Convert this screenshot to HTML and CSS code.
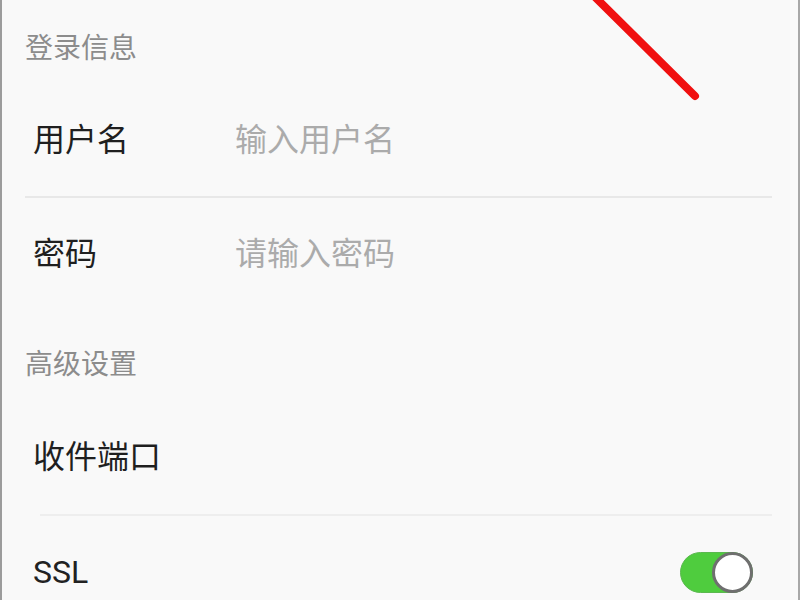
FILE: index.html
```html
<!DOCTYPE html>
<html lang="zh-CN">
<head>
<meta charset="utf-8">
<title>账户设置</title>
<link rel="stylesheet" href="styles.css">
</head>
<body>
<div class="screen">
  <div class="list">
    <div class="section-title">登录信息</div>
    <div class="row">
      <span class="label">用户名</span>
      <span class="placeholder">输入用户名</span>
    </div>
    <div class="divider"></div>
    <div class="row">
      <span class="label">密码</span>
      <span class="placeholder">请输入密码</span>
    </div>
    <div class="section-title">高级设置</div>
    <div class="row row-tall">
      <span class="label">收件端口</span>
    </div>
    <div class="divider divider-inset"></div>
    <div class="row row-switch">
      <span class="label label-latin">SSL</span>
      <span class="toggle"><span class="knob"></span></span>
    </div>
  </div>
  <svg class="mark" width="800" height="600" viewBox="0 0 800 600">
    <line x1="594" y1="-4" x2="695" y2="96" stroke="#f01010" stroke-width="8" stroke-linecap="round"/>
  </svg>
</div>
</body>
</html>
```
FILE: styles.css
```css
html, body {
  margin: 0;
  padding: 0;
  height: 100%;
  overflow: hidden;
}
body {
  background: #f9f9f9;
  font-family: "Noto Sans CJK SC", "Noto Sans", sans-serif;
}
.screen {
  position: relative;
  width: 800px;
  height: 600px;
  box-sizing: border-box;
  border-left: 2px solid #9c9c9c;
  border-right: 2px solid #a8a8a8;
  overflow: hidden;
  background: #f9f9f9;
}
.list {
  display: flex;
  flex-direction: column;
  margin-top: -6px;
}
.section-title {
  height: 90px;
  box-sizing: border-box;
  padding-top: 38px;
  padding-left: 23px;
  font-size: 28px;
  line-height: 28px;
  color: #8c8c8c;
}
.row {
  height: 112px;
  box-sizing: border-box;
  padding-bottom: 7px;
  display: flex;
  align-items: center;
  padding-left: 31px;
  flex-shrink: 0;
}
.row-tall {
  height: 114px;
}
.label {
  width: 202px;
  font-size: 32px;
  line-height: 32px;
  color: #1f1f1f;
}
.label-latin {
  font-family: "Roboto", "Noto Sans", sans-serif;
  font-size: 32px;
  color: #222;
}
.placeholder {
  font-size: 32px;
  line-height: 32px;
  color: #ababab;
}
.divider {
  height: 2px;
  margin-left: 23px;
  margin-right: 26px;
  background: #e8e8e8;
  flex-shrink: 0;
}
.divider-inset {
  margin-left: 38px;
  background: #eeeeee;
}
.row-switch {
  justify-content: space-between;
  padding-right: 45px;
  padding-bottom: 0;
}
.toggle {
  position: relative;
  width: 73px;
  height: 41px;
  box-sizing: border-box;
  border-radius: 21px;
  background: #4fcc3e;
  border: 1px solid #5bb84f;
  display: flex;
  justify-content: flex-end;
  align-items: center;
}
.knob {
  width: 41px;
  height: 41px;
  margin-right: -1px;
  box-sizing: border-box;
  border-radius: 50%;
  background: #ffffff;
  border: 3px solid #6f6f6f;
}
.mark {
  position: absolute;
  left: -2px;
  top: 0;
  pointer-events: none;
}
```
